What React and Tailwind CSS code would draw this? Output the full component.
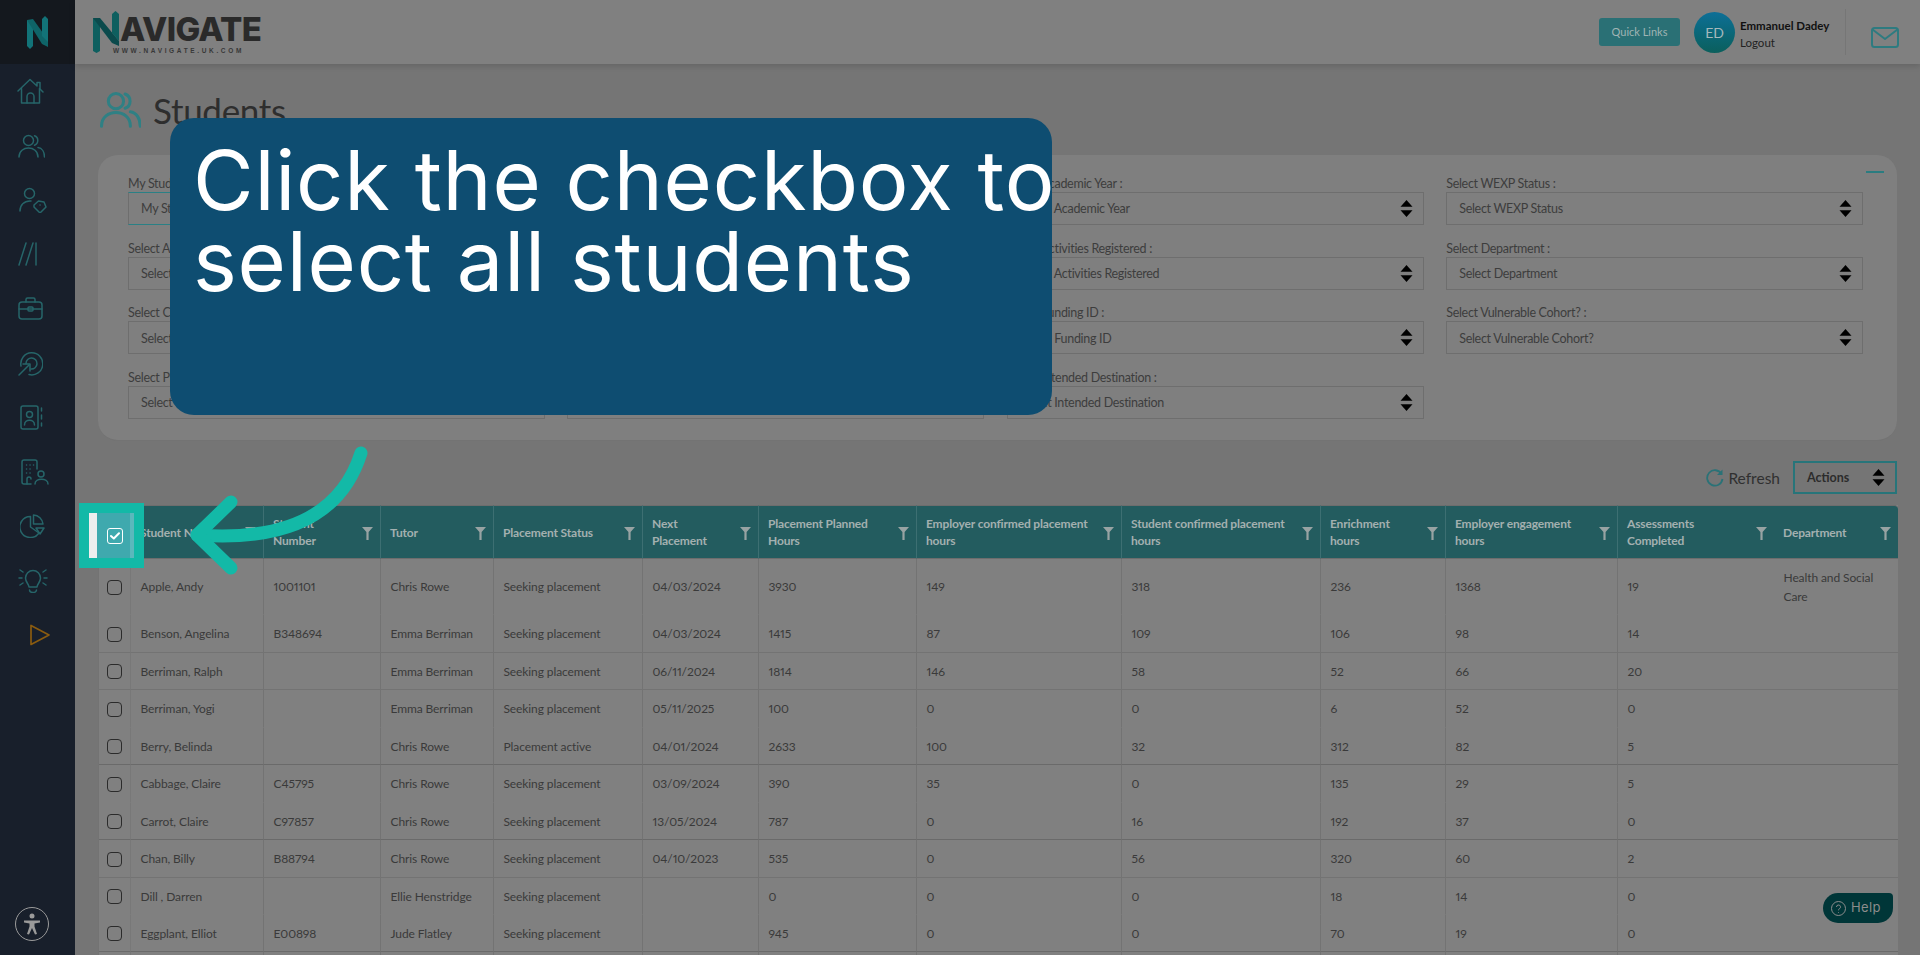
import React from "react";

const teal = "#266569";

function Ico({ w, h, vb, children, className = "", color = teal, sw = 1.5 }) {
  return (
    <svg width={w} height={h} viewBox={vb} fill="none" stroke={color} strokeWidth={sw} strokeLinecap="round" strokeLinejoin="round" className={className}>
      {children}
    </svg>
  );
}

const UsersPaths = () => (
  <>
    <circle cx="10.5" cy="6.5" r="5" />
    <path d="M16.5 1.8a5 5 0 0 1 0 9.4" />
    <path d="M1 23C1 11 20 11 20 23" />
    <path d="M20 13.5C24 14 26.5 18 26.5 23" />
  </>
);

const sideIcons = [
  { pl: "pl-[17px]", el: <Ico w={27} h={26} vb="0 0 27 26"><path d="M1 13L13 1.5L20 8V4.5H23V11L26 14" /><path d="M4.5 10.5V25H22.5V10.5" /><path d="M10 25V18.5a3.5 3.5 0 0 1 7 0V25" /></Ico> },
  { pl: "pl-[18px]", el: <Ico w={27} h={24} vb="0 0 27 24"><UsersPaths /></Ico> },
  { pl: "pl-[19px]", el: <Ico w={28} h={26} vb="0 0 28 26"><circle cx="10.5" cy="6.5" r="5" /><path d="M1 24c0-6 4-10 10-10h1" /><path d="M15 18l4.5-4 5.5 1 2 5-6 6-6-6z" /><path d="M21 18h.1" /></Ico> },
  { pl: "pl-[18px]", el: <Ico w={19} h={24} vb="0 0 19 24"><path d="M1 23L8 1" /><path d="M8 23L15 1" /><path d="M18 1V23" /></Ico> },
  { pl: "pl-[18px]", el: <Ico w={25} h={23} vb="0 0 25 23"><rect x="1" y="5" width="23" height="17" rx="3" /><path d="M8 5V2.5A1.5 1.5 0 0 1 9.5 1h6A1.5 1.5 0 0 1 17 2.5V5" /><path d="M1 12H24" /><rect x="10" y="10" width="5" height="4" rx="1" /></Ico> },
  { pl: "pl-[18px]", el: <Ico w={25} h={25} vb="0 0 25 25"><path d="M3 15A11 11 0 1 1 11 23.5" /><path d="M8 12.5A5.5 5.5 0 1 1 13 18" /><path d="M1 24L11 14" /><path d="M5 13H12V20" /></Ico> },
  { pl: "pl-[20px]", el: <Ico w={23} h={25} vb="0 0 23 25"><rect x="1" y="1" width="17" height="23" rx="2" /><circle cx="9.5" cy="9.5" r="3" /><path d="M4.5 20c0-6.5 10-6.5 10 0" /><path d="M21.5 3v3M21.5 10v4M21.5 18v3" /></Ico> },
  { pl: "pl-[21px]", el: <Ico w={28} h={26} vb="0 0 28 26"><path d="M10 25H3a2 2 0 0 1-2-2V3a2 2 0 0 1 2-2h11a2 2 0 0 1 2 2v7" /><path d="M5.5 6h.1M9 6h.1M12.5 6h.1M5.5 10h.1M9 10h.1M5.5 14h.1M9 14h.1" /><path d="M6 25v-5a2 2 0 0 1 4 0" /><circle cx="20" cy="15" r="3" /><path d="M14 25c0-6.5 13-6.5 13 0" /></Ico> },
  { pl: "pl-[20px]", el: <Ico w={25} h={24} vb="0 0 25 24"><path d="M10.5 2.5A10.5 10.5 0 1 0 19 19L10.5 13Z" /><path d="M13.5 1A10 10 0 0 1 23 10H13.5Z" /><path d="M16 14H24L20 20Z" /></Ico> },
  { pl: "pl-[18px]", el: <Ico w={30} h={25} vb="0 0 30 25"><path d="M11 19C11 16 7.5 14.500 7.500 10a7.500 7.500 0 0 1 15 0C22.500 14.500 19 16 19 19Z" /><path d="M11.500 22a3.500 2.500 0 0 0 7 0" /><path d="M2 2L5 4M1 10H4M2 17L5 15M28 2L25 4M29 10H26M28 17L25 15" /></Ico> },
  { pl: "pl-[30px]", el: <Ico w={20} h={22} vb="0 0 20 22" color="#8a5b10" sw={1.7}><path d="M1 1.500V20.500L19 11Z" /></Ico> },
];

function Sort() {
  return (
    <svg width="13" height="17" viewBox="0 0 13 17" className="shrink-0">
      <path d="M6.500 0L12.500 6.800H.500Z" fill="#000" />
      <path d="M.500 10.200H12.500L6.500 17Z" fill="#000" />
    </svg>
  );
}

function Filter() {
  return (
    <svg width="11" height="13" viewBox="0 0 11 13" className="shrink-0 mt-[3px]">
      <path d="M0 0H11L6.600 5V13H4.400V5Z" fill="#98a3a3" />
    </svg>
  );
}

const fields = [
  ["My Students :", "My Students", true],
  ["Select Assessment :", "Select Assessment"],
  ["Select Academic Year :", "Select Academic Year"],
  ["Select WEXP Status :", "Select WEXP Status"],
  ["Select Activities :", "Select Activities"],
  ["Select Tutor :", "Select Tutor"],
  ["Select Activities Registered :", "Select Activities Registered"],
  ["Select Department :", "Select Department"],
  ["Select Cohort :", "Select Cohort"],
  ["Select Employer :", "Select Employer"],
  ["Select Funding ID :", "Select Funding ID"],
  ["Select Vulnerable Cohort? :", "Select Vulnerable Cohort?"],
  ["Select Placement Status :", "Select Placement Status"],
  ["Select Sector :", "Select Sector"],
  ["Select Intended Destination :", "Select Intended Destination"],
];

const cols = [
  { t: "", w: "w-[32px]" },
  { t: "Student Name", w: "w-[133px]" },
  { t: "Student Number", w: "w-[117px]", narrow: "max-w-[70px]" },
  { t: "Tutor", w: "w-[113px]" },
  { t: "Placement Status", w: "w-[149px]" },
  { t: "Next Placement", w: "w-[116px]", narrow: "max-w-[70px]" },
  { t: "Placement Planned Hours", w: "w-[158px]", narrow: "max-w-[120px]" },
  { t: "Employer confirmed placement hours", w: "w-[205px]", narrow: "max-w-[180px]" },
  { t: "Student confirmed placement hours", w: "w-[199px]", narrow: "max-w-[170px]" },
  { t: "Enrichment hours", w: "w-[125px]", narrow: "max-w-[80px]" },
  { t: "Employer engagement hours", w: "w-[172px]", narrow: "max-w-[130px]" },
  { t: "Assessments Completed", w: "w-[156px]", narrow: "max-w-[90px]" },
  { t: "Department", w: "w-[124px]" },
];

const rows = [
  { h: "h-[56px]", b: "border-b-transparent", c: ["Apple, Andy", "1001101", "Chris Rowe", "Seeking placement", "04/03/2024", "3930", "149", "318", "236", "1368", "19", "Health and Social Care"] },
  { h: "h-[38px]", b: "border-b-[#737373]", c: ["Benson, Angelina", "B348694", "Emma Berriman", "Seeking placement", "04/03/2024", "1415", "87", "109", "106", "98", "14", ""] },
  { h: "h-[37px]", b: "border-b-[#737373]", c: ["Berriman, Ralph", "", "Emma Berriman", "Seeking placement", "06/11/2024", "1814", "146", "58", "52", "66", "20", ""] },
  { h: "h-[38px]", b: "border-b-transparent", c: ["Berriman, Yogi", "", "Emma Berriman", "Seeking placement", "05/11/2025", "100", "0", "0", "6", "52", "0", ""] },
  { h: "h-[37px]", b: "border-b-[#6a6a6a]", c: ["Berry, Belinda", "", "Chris Rowe", "Placement active", "04/01/2024", "2633", "100", "32", "312", "82", "5", ""] },
  { h: "h-[38px]", b: "border-b-transparent", c: ["Cabbage, Claire", "C45795", "Chris Rowe", "Seeking placement", "03/09/2024", "390", "35", "0", "135", "29", "5", ""] },
  { h: "h-[37px]", b: "border-b-[#6a6a6a]", c: ["Carrot, Claire", "C97857", "Chris Rowe", "Seeking placement", "13/05/2024", "787", "0", "16", "192", "37", "0", ""] },
  { h: "h-[38px]", b: "border-b-[#737373]", c: ["Chan, Billy", "B88794", "Chris Rowe", "Seeking placement", "04/10/2023", "535", "0", "56", "320", "60", "2", ""] },
  { h: "h-[37px]", b: "border-b-transparent", c: ["Dill , Darren", "", "Ellie Henstridge", "Seeking placement", "", "0", "0", "0", "18", "14", "0", ""] },
  { h: "h-[37px]", b: "border-b-[#6a6a6a]", c: ["Eggplant, Elliot", "E00898", "Jude Flatley", "Seeking placement", "", "945", "0", "0", "70", "19", "0", ""] },
  { h: "h-[37px]", b: "border-b-transparent", c: ["", "", "", "", "", "", "", "", "", "", "", ""] },
];

export default function App() {
  return (
    <div className="relative flex h-[955px] w-[1920px] overflow-hidden bg-[#757575] font-['Lato','Liberation_Sans',sans-serif] text-[#3a3a3a]">
      {/* Sidebar */}
      <aside className="flex w-[75px] shrink-0 flex-col bg-[#181f2b]">
        <div className="flex h-[64px] items-center justify-center bg-[#14181e]">
          <svg width="21" height="33" viewBox="0 0 21 33">
            <path d="M0 4L6 5V30L3 33L0 30Z" fill="#127378" />
            <path d="M0 4L6 3L21 24V31L15 28Z" fill="#0f6468" />
            <path d="M15 3L18 0L21 3V26L15 20Z" fill="#127378" />
          </svg>
        </div>
        <nav className="flex flex-col">
          {sideIcons.map((s, i) => (
            <div key={i} className={`flex h-[54.400px] items-center ${s.pl}`}>{s.el}</div>
          ))}
        </nav>
        <div className="mt-auto mb-[14px] ml-[15px] flex h-[34px] w-[34px] items-center justify-center rounded-full border border-[#9a9a9a]">
          <svg width="18" height="22" viewBox="0 0 18 22" fill="#9a9a9a">
            <circle cx="9" cy="3" r="2.500" />
            <path d="M1 7.500L17 7.500V9.500L11.500 10.500L11.500 13.500L14 21L12 21.500L9 15L6 21.500L4 21L6.500 13.500V10.500L1 9.500Z" />
          </svg>
        </div>
      </aside>

      <div className="flex min-w-0 flex-1 flex-col">
        {/* Header */}
        <header className="z-10 flex h-[64px] shrink-0 items-center bg-[#808080] pr-[21px] pl-[18px] shadow-[0_2px_6px_rgba(0,0,0,0.15)]">
          <div className="flex h-[42px] w-[170px] items-start">
            <svg width="27" height="42" viewBox="0 0 27 42" className="shrink-0">
              <path d="M0 7L7 9V40L3.500 42L0 40Z" fill="#0e5f5f" />
              <path d="M0 7L7 7L26 30V35L19 32Z" fill="#0b4a4c" />
              <path d="M19 3L22.500 0L26 3V30L19 22Z" fill="#0e5f5f" />
            </svg>
            <div className="flex flex-col items-start">
              <span className="mt-[3px] font-['Inter',sans-serif] text-[33px] leading-[31px] font-extrabold tracking-[-0.700px] text-[#2a2a2a]">AVIGATE</span>
              <span className="mt-[2px] -ml-[7px] font-['Liberation_Sans',sans-serif] text-[6.500px] leading-[8px] font-bold tracking-[2.650px] text-[#383838]">WWW.NAVIGATE.UK.COM</span>
            </div>
          </div>
          <div className="ml-auto flex h-[28px] w-[81px] items-center justify-center rounded-[3px] bg-[#2a7075] text-[11px] text-[#a0b4b4]">Quick Links</div>
          <div className="ml-[14px] flex h-[41px] w-[41px] items-center justify-center rounded-full bg-gradient-to-b from-[#0e6f97] to-[#0b5f5c] text-[14px] text-[#a5b8bc]">ED</div>
          <div className="mt-[5px] ml-[5px] flex w-[105px] flex-col">
            <span className="text-[11.500px] leading-[17px] font-bold text-[#111]">Emmanuel Dadey</span>
            <span className="text-[11.500px] leading-[18px] text-[#222]">Logout</span>
          </div>
          <div className="h-[46px] w-px bg-[#767676]" />
          <svg width="28" height="21" viewBox="0 0 28 21" fill="none" stroke="#2e7b80" strokeWidth="2" strokeLinejoin="round" className="mt-[10px] ml-[25px] shrink-0">
            <rect x="1" y="1" width="26" height="19" rx="2.500" />
            <path d="M1.500 2.500L14 12L26.500 2.500" />
          </svg>
        </header>

        <main className="flex min-h-0 flex-1 flex-col pr-[23px] pl-[23px]">
          {/* Title */}
          <div className="flex h-[91px] shrink-0 items-center pl-[2px]">
            <Ico w={41} h={37} vb="0 0 27 24" color="#2f8084" sw={2}><UsersPaths /></Ico>
            <h1 className="ml-[12px] text-[35px] leading-[44px] tracking-[-0.300px] text-[#2e2e2e]">Students</h1>
          </div>

          {/* Filters */}
          <section className="relative h-[286px] shrink-0 rounded-[20px] border-b border-[#737373] bg-[#7f7f7f] pt-[19px] pr-[34px] pl-[30px]">
            <div className="absolute top-[16px] right-[13px] h-[2px] w-[18px] bg-[#2a7c80]" />
            <div className="grid grid-cols-4 gap-x-[22.600px] gap-y-[13.700px]">
              {fields.map(([label, val, active]) => (
                <div key={label} className="flex flex-col">
                  <label className="pt-[1px] text-[12.500px] leading-[17px] tracking-[-0.300px] text-[#3d3d3d]">{label}</label>
                  <div className={`flex h-[33px] items-center justify-between border pr-[10px] pl-[12px] text-[12.500px] tracking-[-0.300px] text-[#3d3d3d] ${active ? "border-x-[#6e6e6e] border-y-[#2a8085]" : "border-[#6e6e6e]"}`}>
                    <span className="pt-[2px]">{val}</span>
                    <Sort />
                  </div>
                </div>
              ))}
            </div>
          </section>

          {/* Toolbar */}
          <div className="flex shrink-0 items-center justify-end pt-[20px] pb-[11px]">
            <svg width="18" height="18" viewBox="0 0 18 18" fill="none" stroke="#2a7277" strokeWidth="1.800" className="shrink-0">
              <path d="M15.500 5A7.700 7.700 0 1 0 16.500 10" />
              <path d="M16.500 .5V6H11Z" fill="#2a7277" stroke="none" />
            </svg>
            <span className="ml-[4px] text-[15.500px] leading-[20px] text-[#303030]">Refresh</span>
            <div className="ml-[13px] flex h-[33px] w-[104px] items-center justify-between border-2 border-[#27757a] pr-[10px] pl-[12px] text-[12.500px] font-bold text-[#2c2c2c]">
              <span className="pt-[1px]">Actions</span>
              <Sort />
            </div>
          </div>

          {/* Table */}
          <table className="w-full shrink-0 table-fixed border-separate border-spacing-0 border-l border-[#737373] bg-[#808080] text-[12px] tracking-[-0.100px] [font-variant-numeric:proportional-nums]">
            <colgroup>
              {cols.map((c, i) => <col key={i} className={c.w} />)}
            </colgroup>
            <thead>
              <tr>
                {cols.map((c, i) => (
                  <th key={i} className={`h-[54px] border-y border-y-[#6d6d6d] bg-[#235c5f] p-0 text-left align-middle ${i === 12 ? "rounded-tr-[4px]" : ""} ${i < 11 ? "border-r border-r-[#3d6f72]" : ""}`}>
                    {i > 0 && (
                      <div className="flex items-center justify-between pr-[7px] pl-[9px]">
                        <span className={`text-[12px] leading-[17px] font-bold tracking-[-0.150px] text-[#a3b0b0] ${c.narrow || ""}`}>{c.t}</span>
                        <Filter />
                      </div>
                    )}
                  </th>
                ))}
              </tr>
            </thead>
            <tbody>
              {rows.map((r, ri) => (
                <tr key={ri} className={r.h}>
                  <td className={`border-r border-b border-r-[#787878] p-0 ${r.b}`}>
                    {r.c[0] && <div className="mt-[1px] ml-[8px] h-[15px] w-[15px] rounded-[4px] border border-[#2b2b2b]" />}
                  </td>
                  {r.c.map((v, i) => (
                    <td key={i} className={`border-b p-0 pr-[8px] pl-[9.500px] align-middle leading-[19px] text-[#3a3a3a] ${r.b} ${i < 10 ? "border-r border-r-[#737373]" : ""}`}>{v}</td>
                  ))}
                </tr>
              ))}
            </tbody>
          </table>
        </main>
      </div>

      {/* Help */}
      <div className="absolute top-[893px] left-[1823px] flex h-[30px] w-[70px] items-center gap-[5px] rounded-tl-[15px] rounded-tr-[4px] rounded-br-[15px] rounded-bl-[15px] bg-[#003638] pl-[8px] font-['Inter',sans-serif] text-[13px] tracking-[0.400px] text-[#8c8c8c]">
        <svg width="15" height="15" viewBox="0 0 15 15" fill="none" stroke="#8c8c8c" className="shrink-0">
          <circle cx="7.500" cy="7.500" r="7" />
          <path d="M5.500 6a2 2 0 1 1 3 1.700c-.7.400-1 .8-1 1.600M7.500 11v.7" />
        </svg>
        <span>Help</span>
      </div>

      {/* Highlight around the checkbox */}
      <div className="absolute top-[503px] left-[79px] flex h-[65px] w-[65px] border-[10px] border-[#13b9a7]">
        <div className="w-[8px] bg-[#eeeeee]" />
        <div className="flex flex-1 items-center justify-center bg-[#3fa9ae]">
          <div className="ml-[3px] flex h-[16px] w-[16px] items-center justify-center rounded-[3px] border border-white">
            <svg width="10" height="8" viewBox="0 0 10 8" fill="none" stroke="#fff" strokeWidth="2" strokeLinecap="round" strokeLinejoin="round">
              <path d="M1 4L3.800 6.500L9 1.200" />
            </svg>
          </div>
        </div>
        <div className="w-[4px] bg-[#5bb8bc]" />
      </div>

      {/* Arrow */}
      <svg width="400" height="140" viewBox="0 0 400 140" fill="none" stroke="#13b9a7" strokeWidth="13" strokeLinecap="round" strokeLinejoin="round" className="absolute top-[440px] left-0">
        <path d="M361 13Q332 105 197 95" />
        <path d="M231 62L197 95L231 128" />
      </svg>

      {/* Callout */}
      <div className="absolute top-[118px] left-[170px] h-[297px] w-[882px] rounded-[24px] bg-[#0e4d71] pt-[22px] pl-[23px] font-['Inter',sans-serif] text-[83px] leading-[80.700px] font-normal tracking-[0.750px] whitespace-nowrap text-white">
        Click the checkbox to<br />select all students
      </div>
    </div>
  );
}
